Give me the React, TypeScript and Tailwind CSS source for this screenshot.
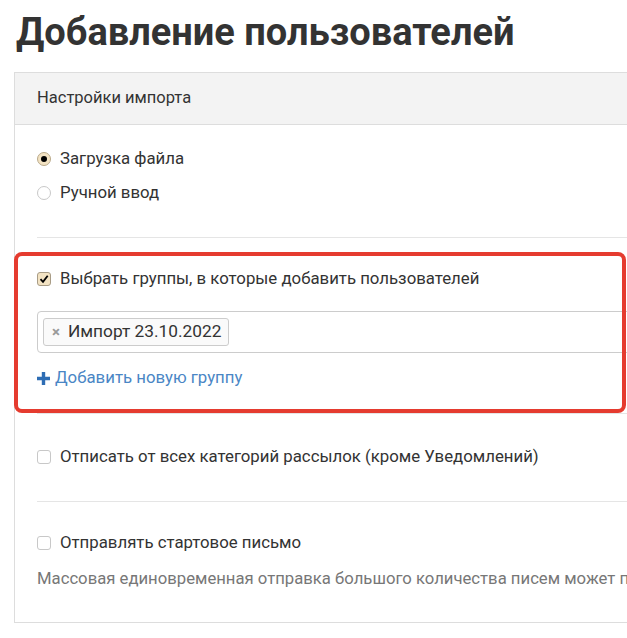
import React from "react";

const font = { fontFamily: "Roboto, Lato, Arial, sans-serif" };

function Radio({ checked }: { checked?: boolean }) {
  return (
    <span
      className={
        "flex h-[14px] w-[14px] shrink-0 items-center justify-center rounded-full border " +
        (checked ? "border-[#b9a98a] bg-[#f3e3c3]" : "border-[#c8c8c8] bg-white")
      }
    >
      {checked && <span className="h-[6px] w-[6px] rounded-full bg-black" />}
    </span>
  );
}

function Check({ checked }: { checked?: boolean }) {
  return (
    <span
      className={
        "flex h-[14px] w-[14px] shrink-0 items-center justify-center rounded-[3px] border " +
        (checked ? "border-[#a89c86] bg-[#f3e3c3]" : "border-[#c8c8c8] bg-white")
      }
    >
      {checked && (
        <svg width="10" height="10" viewBox="0 0 10 10">
          <path d="M1.5 5.2 L4 7.8 L8.7 1.8" fill="none" stroke="#000" strokeWidth="1.8" />
        </svg>
      )}
    </span>
  );
}

function Row({ children }: { children: React.ReactNode }) {
  return <div className="flex h-[34px] items-center gap-[9px] text-[16.8px] text-[#333]">{children}</div>;
}

export default function App() {
  return (
    <div className="relative h-[638px] w-[627px] overflow-hidden bg-white" style={font}>
      <h1 className="h-[72px] pl-[16px] pt-[8px] text-[38px] font-bold leading-[48px] text-[#333]">
        Добавление пользователей
      </h1>
      <div className="ml-[14px] w-[800px] border border-[#dddddd]">
        <div className="flex h-[52px] items-center border-b border-[#dddddd] bg-[#f3f3f3] pl-[22px] text-[16.5px] text-[#333]">
          Настройки импорта
        </div>
        <div className="px-[22px] pt-[17px] pb-[26px]">
          <Row>
            <Radio checked />
            <span>Загрузка файла</span>
          </Row>
          <Row>
            <Radio />
            <span>Ручной ввод</span>
          </Row>
          <div className="mt-[27px] h-px bg-[#e5e5e5]" />
          <div className="mt-[24px]">
            <Row>
              <Check checked />
              <span>Выбрать группы, в которые добавить пользователей</span>
            </Row>
          </div>
          <div className="mt-[15px] flex h-[42px] items-center rounded-[4px] border border-[#cccccc] pl-[5px]">
            <div className="flex h-[28px] items-center gap-[8px] rounded-[3px] border border-[#cccccc] bg-[#fafafa] pl-[8px] pr-[7px] text-[17.3px] text-[#333]">
              <span className="text-[15px] font-bold text-[#999]">×</span>
              <span>Импорт 23.10.2022</span>
            </div>
          </div>
          <div className="mt-[8px] flex h-[34px] items-center gap-[5px] text-[16.8px] text-[#4a86c5]">
            <svg width="13" height="13" viewBox="0 0 13 13">
              <path d="M4.8 0h3.4v4.8H13v3.4H8.2V13H4.8V8.2H0V4.8h4.8z" fill="#2e6db4" />
            </svg>
            <span>Добавить новую группу</span>
          </div>
          <div className="mt-[18px] h-px bg-[#e5e5e5]" />
          <div className="mt-[26px]">
            <Row>
              <Check />
              <span>Отписать от всех категорий рассылок (кроме Уведомлений)</span>
            </Row>
          </div>
          <div className="mt-[27px] h-px bg-[#e5e5e5]" />
          <div className="mt-[24px]">
            <Row>
              <Check />
              <span>Отправлять стартовое письмо</span>
            </Row>
          </div>
          <div className="mt-[2px] flex h-[34px] items-center whitespace-nowrap text-[16.7px] text-[#777]">
            Массовая единовременная отправка большого количества писем может повлиять на доставляемость
          </div>
        </div>
      </div>
      <div className="pointer-events-none absolute left-[14px] top-[252px] h-[161px] w-[612px] rounded-[8px] border-4 border-[#e53b2f]" />
    </div>
  );
}
